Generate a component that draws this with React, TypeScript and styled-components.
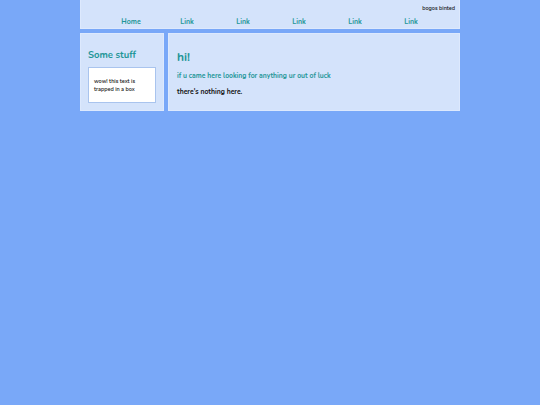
import styled, { createGlobalStyle } from "styled-components";

const Global = createGlobalStyle`
  html, body {
    margin: 0;
    padding: 0;
    background: #79a8f8;
    font-family: "Nunito", Lato, "Noto Sans", sans-serif;
  }
`

const Page = styled.div`
  width: 380px;
  margin: 0 auto;
`

const Header = styled.header`
  height: 29px;
  background: #d4e3fb;
  box-sizing: border-box;
  border: 1px solid #dde9fd;
  border-top: none;
  display: flex;
  flex-direction: column;
`

const User = styled.div`
  text-align: right;
  font-size: 5.5px;
  font-weight: 600;
  color: #111;
  padding: 4px 4px 0 0;
  height: 12px;
  flex: none;
  box-sizing: border-box;
`

const Nav = styled.ul`
  list-style: none;
  margin: 0;
  padding: 5px 0 0 22px;
  display: grid;
  grid-template-columns: repeat(6, 56px);
  li{
    text-align: center;
    font-size: 7px;
    font-weight: 700;
    color: #1f9698;
    line-height: 9px;
  }
`

const Body = styled.div`
  display: flex;
  gap: 4px;
  margin-top: 4px;
`

const Panel = styled.section<{ $width?: number }>`
  background: #d4e3fb;
  border: 1px solid #dde9fd;
  box-sizing: border-box;
  height: 78px;
  ${p => p.$width ? `width: ${p.$width}px; flex: none;` : `flex: 1;`}
`

const Side = styled(Panel)`
  padding: 15px 7px 0;
`

const SideTitle = styled.h3`
  margin: 0 0 6px;
  font-size: 9.5px;
  font-weight: 700;
  color: #1f9698;
  line-height: 12px;
`

const TrapBox = styled.div`
  background: #fff;
  border: 1px solid #a9c4ee;
  height: 36px;
  box-sizing: border-box;
  padding: 9px 5px 0;
  font-size: 5.5px;
  line-height: 8px;
  color: #111;
  font-weight: 600;
`

const Main = styled(Panel)`
  padding: 15px 8px 0;
`

const Title = styled.h1`
  margin: 0 0 6px;
  font-size: 12px;
  font-weight: 700;
  color: #1f9698;
  line-height: 16px;
`

const Lead = styled.p`
  margin: 0 0 7px;
  font-size: 6.8px;
  font-weight: 700;
  color: #1f9698;
  line-height: 9px;
`

const Text = styled.p`
  margin: 0;
  font-size: 6.8px;
  font-weight: 700;
  color: #111;
  line-height: 9px;
`

export default function App(){
    const links = ["Home", "Link", "Link", "Link", "Link", "Link"]
    return <>
        <Global />
        <Page>
            <Header>
                <User>bogos binted</User>
                <Nav>
                    {links.map((l, i) => <li key={i}>{l}</li>)}
                </Nav>
            </Header>
            <Body>
                <Side $width={84}>
                    <SideTitle>Some stuff</SideTitle>
                    <TrapBox>wow! this text is<br/>trapped in a box</TrapBox>
                </Side>
                <Main>
                    <Title>hi!</Title>
                    <Lead>if u came here looking for anything ur out of luck</Lead>
                    <Text>there's nothing here.</Text>
                </Main>
            </Body>
        </Page>
    </>
}
